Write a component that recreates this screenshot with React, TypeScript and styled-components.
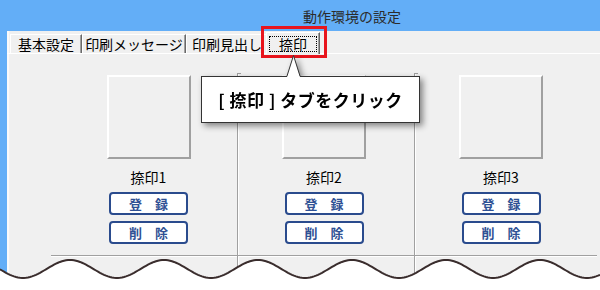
import styled, { createGlobalStyle } from "styled-components"

const GlobalStyle = createGlobalStyle`
    html, body {
        margin: 0;
        padding: 0;
        background: #ffffff;
        font-family: "Noto Sans CJK JP", "Noto Sans", sans-serif;
    }
`

const tabs = [
    { label: '基本設定', width: 72 },
    { label: '印刷メッセージ', width: 104 },
    { label: '印刷見出し', width: 82 },
]

const stamps = ['捺印1', '捺印2', '捺印3']

const wavePoints = () => {
    const pts: string[] = []
    for (let x = 0; x <= 600; x += 2) {
        const y = 19 - 9 * Math.cos((2 * Math.PI * (x - 70)) / 94)
        pts.push(`${x},${y.toFixed(2)}`)
    }
    return pts
}

const App = () => {
    const pts = wavePoints()

    return (
        <Stage>
            <GlobalStyle />
            <Window>
                <TitleBar>動作環境の設定</TitleBar>
                <Client>
                    <TabStrip>
                        {tabs.map(tab => (
                            <Tab key={tab.label} $width={tab.width}>{tab.label}</Tab>
                        ))}
                        <ActiveTab>
                            <Focus>捺印</Focus>
                        </ActiveTab>
                    </TabStrip>
                    <TabPage>
                        <Columns>
                            {stamps.map((name, index) => (
                                <Column key={name} $divided={index > 0}>
                                    <Stack $shift={index > 0 ? 4 : 0}>
                                        <StampBox />
                                        <StampLabel>{name}</StampLabel>
                                        <ActionButton>登　録</ActionButton>
                                        <ActionButton>削　除</ActionButton>
                                    </Stack>
                                    <Rule
                                        $left={index === 0 ? -9 : 0}
                                        $right={index === 2 ? -6 : 0}
                                    />
                                </Column>
                            ))}
                        </Columns>
                    </TabPage>
                </Client>
            </Window>

            <Highlight />

            <Callout>
                <CalloutBox>[ 捺印 ] タブをクリック</CalloutBox>
                <Pointer width="18" height="24" viewBox="0 0 18 24">
                    <polygon points="2,23 8.5,1.5 15,23" fill="#ffffff" />
                    <polyline points="2,22 8.5,1.5 15,22" fill="none" stroke="#333333" strokeWidth="1" />
                </Pointer>
            </Callout>

            <Wave width="600" height="40" viewBox="0 0 600 40">
                <path d={`M0,40 L${pts.join(' L')} L600,40 Z`} fill="#ffffff" />
                <path d={`M${pts.join(' L')}`} fill="none" stroke="#3a2d2d" strokeWidth="2" />
            </Wave>
        </Stage>
    )
}

export default App

const Stage = styled.div`
    position: relative;
    width: 600px;
    height: 290px;
    overflow: hidden;
`

const Window = styled.div`
    display: flex;
    flex-direction: column;
    height: 100%;
    padding-left: 7px;
    background: #63aef7;
`

const TitleBar = styled.div`
    flex-shrink: 0;
    height: 31px;
    display: flex;
    align-items: center;
    padding-left: 296px;
    font-size: 14px;
    color: #2b2b2b;
    line-height: 1;
`

const Client = styled.div`
    flex: 1;
    display: flex;
    flex-direction: column;
    min-height: 0;
    background: #f0f0f0;
    box-shadow: inset 2px 0 #fafafa;
`

const TabStrip = styled.div`
    flex-shrink: 0;
    height: 22px;
    display: flex;
    align-items: flex-end;
    padding-left: 3px;
`

const Tab = styled.div<{ $width: number }>`
    box-sizing: border-box;
    width: ${p => p.$width}px;
    height: 19px;
    display: flex;
    align-items: center;
    justify-content: center;
    font-size: 14px;
    line-height: 1;
    color: #000;
    border-top: 1px solid #ffffff;
    border-left: 1px solid #ffffff;
    border-right: 1px solid #696969;
    box-shadow: inset -1px 0 #a0a0a0;
`

const ActiveTab = styled.div`
    position: relative;
    z-index: 1;
    box-sizing: border-box;
    width: 54px;
    height: 22px;
    margin: 0 -2px -1px -2px;
    display: flex;
    align-items: center;
    justify-content: center;
    background: #f0f0f0;
    border-top: 1px solid #ffffff;
    border-left: 1px solid #ffffff;
    border-right: 1px solid #696969;
    box-shadow: inset -1px 0 #a0a0a0;
`

const Focus = styled.span`
    display: inline-block;
    padding: 0 9px;
    border: 1px dotted #000;
    font-size: 14px;
    line-height: 14px;
    color: #000;
`

const TabPage = styled.div`
    flex: 1;
    display: flex;
    flex-direction: column;
    border-top: 1px solid #ffffff;
`

const Columns = styled.div`
    flex: 1;
    display: grid;
    grid-template-columns: 177px 177px 177px;
    margin: 19px 0 0 53px;
`

const Column = styled.div<{ $divided: boolean }>`
    position: relative;
    display: flex;
    flex-direction: column;
    border-left: ${p => (p.$divided ? '1px solid #a0a0a0' : 'none')};
    box-shadow: ${p => (p.$divided ? 'inset 1px 0 #ffffff' : 'none')};

    &::before {
        content: '';
        display: ${p => (p.$divided ? 'block' : 'none')};
        position: absolute;
        top: 0;
        left: 0;
        width: 3px;
        height: 1px;
        background: #a0a0a0;
    }
`

const Stack = styled.div<{ $shift: number }>`
    display: flex;
    flex-direction: column;
    align-items: center;
    margin-right: ${p => p.$shift}px;
`

const StampBox = styled.div`
    box-sizing: border-box;
    width: 84px;
    height: 84px;
    margin-top: 2px;
    border: 2px solid;
    border-color: #ffffff #a0a0a0 #a0a0a0 #ffffff;
    background: #f0f0f0;
`

const StampLabel = styled.div`
    margin-top: 9px;
    font-size: 14px;
    line-height: 18px;
    color: #000;
`

const ActionButton = styled.div`
    box-sizing: border-box;
    width: 79px;
    height: 23px;
    margin-top: 6px;
    display: flex;
    align-items: center;
    justify-content: center;
    border: 2px solid #2a4b8d;
    border-radius: 4px;
    background: #ffffff;
    font-size: 13px;
    font-weight: 700;
    line-height: 1;
    color: #2f5194;
`

const Rule = styled.div<{ $left: number; $right: number }>`
    margin: 11px ${p => p.$right}px 0 ${p => p.$left}px;
    height: 1px;
    background: #a0a0a0;
    border-bottom: 1px solid #ffffff;
`

const Highlight = styled.div`
    position: absolute;
    left: 261px;
    top: 26px;
    width: 66px;
    height: 32px;
    box-sizing: border-box;
    border: 3px solid #e8151d;
`

const Callout = styled.div`
    position: absolute;
    left: 201px;
    top: 54px;
    width: 219px;
    height: 69px;
    filter: drop-shadow(3px 3px 3px rgba(0, 0, 0, 0.45));
`

const CalloutBox = styled.div`
    position: absolute;
    left: 0;
    top: 22px;
    box-sizing: border-box;
    width: 219px;
    height: 47px;
    display: flex;
    align-items: center;
    justify-content: center;
    background: #ffffff;
    border: 1px solid #333333;
    font-size: 17px;
    font-weight: 700;
    letter-spacing: 0.5px;
    color: #000;
`

const Pointer = styled.svg`
    position: absolute;
    left: 84px;
    top: 0;
    display: block;
`

const Wave = styled.svg`
    position: absolute;
    left: 0;
    top: 250px;
    display: block;
`
